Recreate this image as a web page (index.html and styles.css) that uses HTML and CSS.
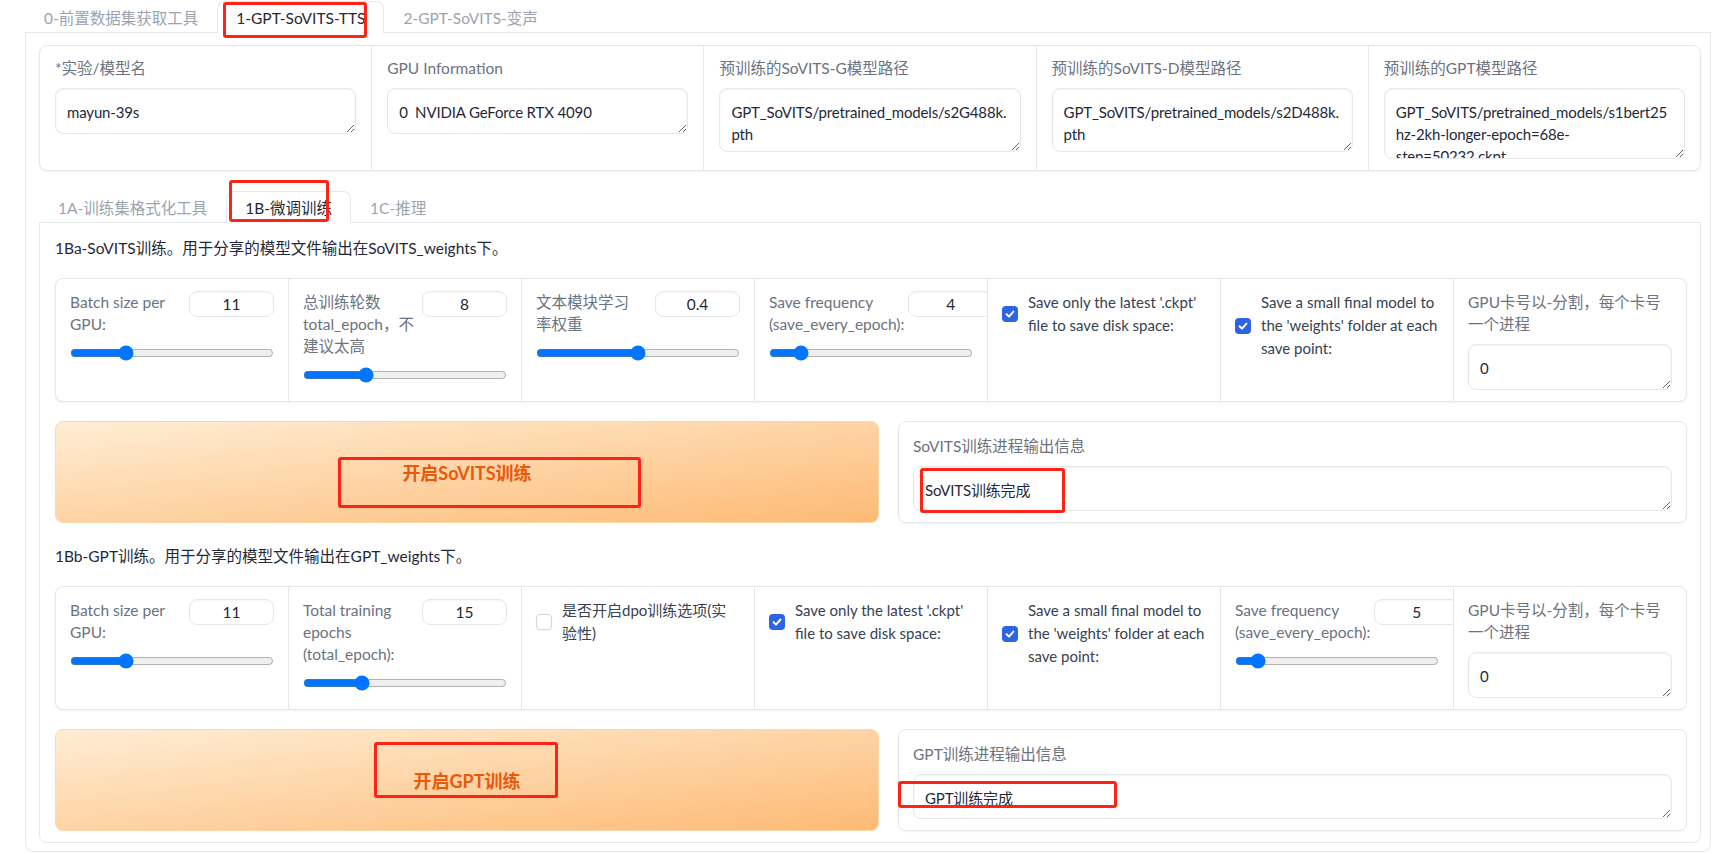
FILE: index.html
```html
<!DOCTYPE html>
<html lang="zh">
<head>
<meta charset="UTF-8">
<title>GPT-SoVITS WebUI</title>
<link rel="stylesheet" href="styles.css">
</head>
<body>

<div class="app">

<!-- 顶部标签页 -->
<div class="tab-nav">
    <button class="tab">0-前置数据集获取工具</button>
    <button class="tab selected">1-GPT-SoVITS-TTS</button>
    <button class="tab">2-GPT-SoVITS-变声</button>
</div>

<div class="tab-panel outer">

    <!-- 模型信息 -->
    <div class="block-row info-row">
        <div class="cell">
            <span class="label">*实验/模型名</span>
            <textarea class="h-one">mayun-39s</textarea>
        </div>
        <div class="cell">
            <span class="label">GPU Information</span>
            <textarea class="h-one">0  NVIDIA GeForce RTX 4090</textarea>
        </div>
        <div class="cell">
            <span class="label">预训练的SoVITS-G模型路径</span>
            <textarea class="h-two">GPT_SoVITS/pretrained_models/s2G488k.pth</textarea>
        </div>
        <div class="cell">
            <span class="label">预训练的SoVITS-D模型路径</span>
            <textarea class="h-two">GPT_SoVITS/pretrained_models/s2D488k.pth</textarea>
        </div>
        <div class="cell">
            <span class="label">预训练的GPT模型路径</span>
            <textarea class="h-three">GPT_SoVITS/pretrained_models/s1bert25hz-2kh-longer-epoch=68e-step=50232.ckpt</textarea>
        </div>
    </div>

    <div class="sub-tabs">
        <div class="tab-nav">
            <button class="tab">1A-训练集格式化工具</button>
            <button class="tab selected">1B-微调训练</button>
            <button class="tab">1C-推理</button>
        </div>

        <div class="tab-panel inner">
            <p class="md">1Ba-SoVITS训练。用于分享的模型文件输出在SoVITS_weights下。</p>

            <div class="block-row param-row">
                <div class="cell">
                    <div class="num-head">
                        <span class="label">Batch size per GPU:</span>
                        <input type="number" value="11">
                    </div>
                    <input type="range" min="1" max="40" step="1" value="11">
                </div>
                <div class="cell">
                    <div class="num-head">
                        <span class="label">总训练轮数 total_epoch，不建议太高</span>
                        <input type="number" value="8">
                    </div>
                    <input type="range" min="1" max="25" step="1" value="8">
                </div>
                <div class="cell">
                    <div class="num-head">
                        <span class="label">文本模块学习<br>率权重</span>
                        <input type="number" value="0.4">
                    </div>
                    <input type="range" min="0.2" max="0.6" step="0.05" value="0.4">
                </div>
                <div class="cell">
                    <div class="num-head">
                        <span class="label">Save frequency (save_every_epoch):</span>
                        <input type="number" value="4">
                    </div>
                    <input type="range" min="1" max="25" step="1" value="4">
                </div>
                <div class="cell">
                    <label class="check-row">
                        <span class="check"><svg viewBox="0 0 16 16" width="16" height="16"><path d="M4.6 8.3 L7 10.6 L11.4 5.6" fill="none" stroke="#fff" stroke-width="2" stroke-linecap="round" stroke-linejoin="round"/></svg></span>
                        <span>Save only the latest '.ckpt' file to save disk space:</span>
                    </label>
                </div>
                <div class="cell">
                    <label class="check-row">
                        <span class="check"><svg viewBox="0 0 16 16" width="16" height="16"><path d="M4.6 8.3 L7 10.6 L11.4 5.6" fill="none" stroke="#fff" stroke-width="2" stroke-linecap="round" stroke-linejoin="round"/></svg></span>
                        <span>Save a small final model to the 'weights' folder at each save point:</span>
                    </label>
                </div>
                <div class="cell">
                    <span class="label">GPU卡号以-分割，每个卡号<br>一个进程</span>
                    <textarea class="h-one">0</textarea>
                </div>
            </div>

            <div class="action-row">
                <button class="run-btn">开启SoVITS训练</button>
                <div class="output">
                    <span class="label">SoVITS训练进程输出信息</span>
                    <textarea class="h-out">SoVITS训练完成</textarea>
                </div>
            </div>

            <p class="md">1Bb-GPT训练。用于分享的模型文件输出在GPT_weights下。</p>

            <div class="block-row param-row">
                <div class="cell">
                    <div class="num-head">
                        <span class="label">Batch size per GPU:</span>
                        <input type="number" value="11">
                    </div>
                    <input type="range" min="1" max="40" step="1" value="11">
                </div>
                <div class="cell">
                    <div class="num-head">
                        <span class="label">Total training epochs (total_epoch):</span>
                        <input type="number" value="15">
                    </div>
                    <input type="range" min="2" max="50" step="1" value="15">
                </div>
                <div class="cell">
                    <label class="check-row">
                        <span class="check off"></span>
                        <span>是否开启dpo训练选项(实验性)</span>
                    </label>
                </div>
                <div class="cell">
                    <label class="check-row">
                        <span class="check"><svg viewBox="0 0 16 16" width="16" height="16"><path d="M4.6 8.3 L7 10.6 L11.4 5.6" fill="none" stroke="#fff" stroke-width="2" stroke-linecap="round" stroke-linejoin="round"/></svg></span>
                        <span>Save only the latest '.ckpt' file to save disk space:</span>
                    </label>
                </div>
                <div class="cell">
                    <label class="check-row">
                        <span class="check"><svg viewBox="0 0 16 16" width="16" height="16"><path d="M4.6 8.3 L7 10.6 L11.4 5.6" fill="none" stroke="#fff" stroke-width="2" stroke-linecap="round" stroke-linejoin="round"/></svg></span>
                        <span>Save a small final model to the 'weights' folder at each save point:</span>
                    </label>
                </div>
                <div class="cell">
                    <div class="num-head">
                        <span class="label">Save frequency (save_every_epoch):</span>
                        <input type="number" value="5">
                    </div>
                    <input type="range" min="1" max="50" step="1" value="5">
                </div>
                <div class="cell">
                    <span class="label">GPU卡号以-分割，每个卡号<br>一个进程</span>
                    <textarea class="h-one">0</textarea>
                </div>
            </div>

            <div class="action-row">
                <button class="run-btn">开启GPT训练</button>
                <div class="output">
                    <span class="label">GPT训练进程输出信息</span>
                    <textarea class="h-out">GPT训练完成</textarea>
                </div>
            </div>
        </div>
    </div>
</div>

</div>

<!-- 红框标注 -->
<div class="mark mark-tab"></div>
<div class="mark mark-subtab"></div>
<div class="mark mark-sovits-btn"></div>
<div class="mark mark-sovits-out"></div>
<div class="mark mark-gpt-btn"></div>
<div class="mark mark-gpt-out"></div>

</body>
</html>
```

FILE: styles.css
```css
body {
margin: 0;
position: relative;
background: #fff;
font-family: Lato, "Noto Sans CJK SC", sans-serif;
font-size: 15.5px;
line-height: 22px;
color: #1f2937;
}

.app {
width: 1686px;
margin-left: 25px;
}

/* 标签页 */
.tab-nav {
display: flex;
padding-top: 1px;
border-bottom: 1px solid #e5e7eb;
}

.tab {
height: 32px;
margin-bottom: -1px;
padding: 0 18px;
border: 1px solid transparent;
border-bottom: none;
border-radius: 8px 8px 0 0;
background: none;
font: inherit;
color: #9ca3af;
cursor: pointer;
}

.tab.selected {
border-color: #e5e7eb;
background: #fff;
color: #1f2937;
}

.tab-panel {
display: flex;
flex-direction: column;
gap: 19px;
border: 1px solid #e5e7eb;
border-top: none;
border-radius: 0 0 8px 8px;
}

.outer {
padding: 12px 9px 8px 13px;
}

.inner {
padding: 11px 13px 11px 15px;
}

.md {
margin: 0;
padding-top: 3px;
color: #1f2937;
}

/* 块 */
.block-row {
display: grid;
gap: 1px;
background: #e5e7eb;
border: 1px solid #e5e7eb;
border-radius: 8px;
overflow: hidden;
box-shadow: 0 1px 2px rgba(0,0,0,0.05);
}

.info-row {
grid-template-columns: repeat(5, 1fr);
}

.param-row {
grid-template-columns: repeat(7, 1fr);
}

.cell {
min-width: 0;
display: flex;
flex-direction: column;
gap: 9px;
padding: 12px 14px 11px;
background: #fff;
overflow: hidden;
}

.info-row .cell {
padding: 11px 15px 11px;
}

.label {
color: #6b7280;
}

textarea {
display: block;
width: 100%;
box-sizing: border-box;
padding: 12px 10px 12px 11px;
border: 1px solid #e5e7eb;
border-radius: 8px;
background: #fff;
font: inherit;
font-size: 15px;
letter-spacing: -0.15px;
line-height: 22px;
color: #1f2937;
resize: vertical;
overflow: hidden;
box-shadow: inset 0 1px 2px rgba(0,0,0,0.05);
}

.h-one { height: 46px; }
.h-two { height: 64px; }
.h-three { height: 71px; }
.h-out { height: 45px; }

/* 数字 + 滑块 */
.num-head {
display: flex;
justify-content: space-between;
align-items: flex-start;
gap: 4px;
}

.num-head .label {
flex: 1 1 auto;
}

.num-head input {
flex: 0 0 85px;
width: 85px;
height: 26px;
box-sizing: border-box;
margin: 0;
padding: 0;
border: 1px solid #e5e7eb;
border-radius: 8px;
background: #fff;
font: inherit;
color: #1f2937;
text-align: center;
box-shadow: inset 0 1px 2px rgba(0,0,0,0.04);
}

input[type=number]::-webkit-inner-spin-button,
input[type=number]::-webkit-outer-spin-button {
-webkit-appearance: none;
margin: 0;
}

input[type=range] {
display: block;
width: 100%;
height: 20px;
margin: -1px 0 0;
}

/* 复选框 */
.check-row {
display: flex;
align-items: center;
gap: 10px;
font-size: 15px;
line-height: 23px;
color: #374151;
}

.check {
flex: 0 0 16px;
height: 16px;
border-radius: 4px;
background: #2b65e3;
display: flex;
}

.check.off {
box-sizing: border-box;
background: #fff;
border: 1px solid #d1d5db;
box-shadow: 0 1px 2px rgba(0,0,0,0.05);
}

/* 按钮与输出 */
.action-row {
display: flex;
gap: 19px;
}

.run-btn {
flex: 0 0 824px;
height: 102px;
border: 1px solid #fed7aa;
border-radius: 8px;
background: linear-gradient(to bottom right, #ffedd5, #fdba74);
font-family: inherit;
font-size: 18px;
font-weight: 700;
color: #ea580c;
cursor: pointer;
}

.output {
flex: 1;
display: flex;
flex-direction: column;
gap: 9px;
padding: 13px 14px 11px;
border: 1px solid #e5e7eb;
border-radius: 8px;
box-shadow: 0 1px 2px rgba(0,0,0,0.05);
}

/* 红框 */
.mark {
position: absolute;
border: 3px solid #fd2317;
border-radius: 3px;
box-sizing: border-box;
pointer-events: none;
}

.mark-tab { left: 223px; top: 2px; width: 144px; height: 36px; }
.mark-subtab { left: 229px; top: 180px; width: 100px; height: 42px; }
.mark-sovits-btn { left: 338px; top: 457px; width: 303px; height: 51px; }
.mark-sovits-out { left: 920px; top: 468px; width: 145px; height: 45px; }
.mark-gpt-btn { left: 374px; top: 742px; width: 184px; height: 56px; }
.mark-gpt-out { left: 898px; top: 781px; width: 219px; height: 27px; }
```
